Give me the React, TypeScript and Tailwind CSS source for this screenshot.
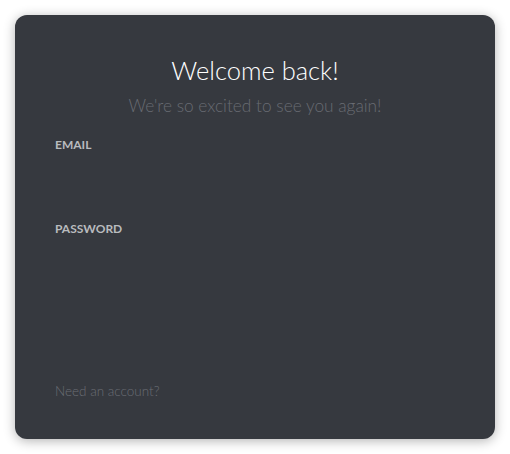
export default function App() {
  return (
    <div className="min-h-screen bg-white p-[15px]" style={{ fontFamily: "Lato, 'Open Sans', sans-serif" }}>
      <div className="flex h-[424px] w-[480px] flex-col rounded-xl bg-[#36393f] px-10 pt-[40px] pb-[39px] shadow-[0_2px_12px_rgba(0,0,0,0.3)]">
        <h1 className="text-center text-[25.5px] leading-[31px] font-light text-white">Welcome back!</h1>
        <p className="mt-[10px] text-center text-[17.3px] leading-5 font-light text-[#686b72]">We're so excited to see you again!</p>

        <label className="mt-[21px] text-[12px] leading-4 font-bold text-[#b9bbbe] uppercase">Email</label>
        <div className="h-[68px]" />
        <label className="text-[12px] leading-4 font-bold text-[#b9bbbe] uppercase">Password</label>

        <a className="mt-auto text-[13.5px] leading-[18px] font-light text-[#6a6d74]">Need an account?</a>
      </div>
    </div>
  );
}
